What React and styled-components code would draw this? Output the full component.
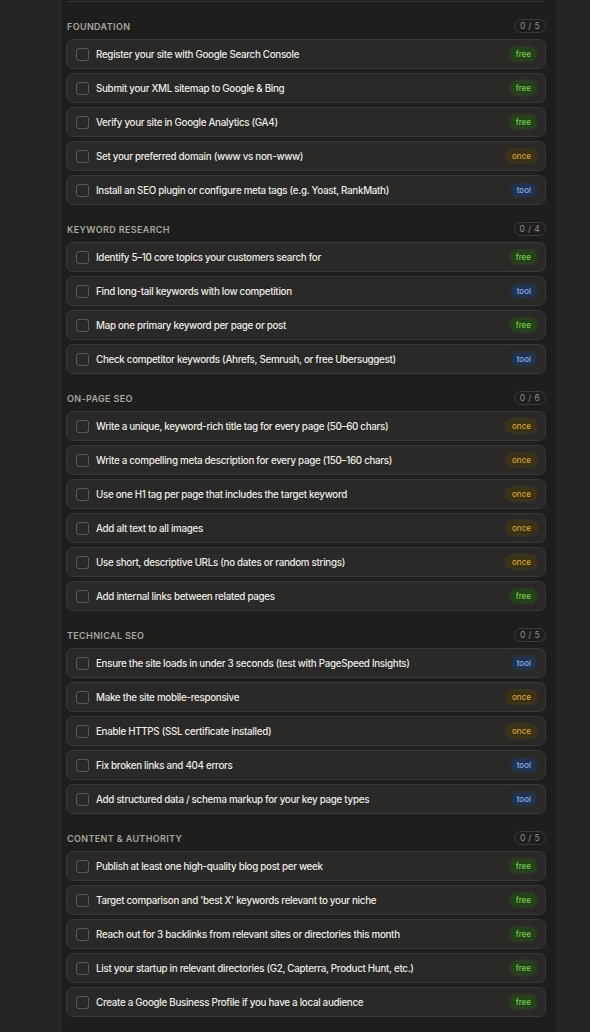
import React from 'react'
import styled, { createGlobalStyle } from 'styled-components'

const Global = createGlobalStyle`
  html, body { margin: 0; padding: 0; background: #262523; }
  body { font-family: Inter, "Noto Sans", sans-serif; -webkit-font-smoothing: antialiased; }
`

const Page = styled.div`
  min-height: 1032px;
  display: flex;
`
const Panel = styled.div`
  margin-left: 62px;
  width: 494px;
  min-height: 1032px;
  background: #1f1e1c;
  padding: 0 10px 0 4px;
  box-sizing: border-box;
`
const Tail = styled.div`
  height: 1px;
  border-bottom: 1px solid #383734;
  margin: 0 2px;
`
const Section = styled.section`
  margin-top: 16px;
`
const Header = styled.div`
  display: flex;
  align-items: center;
  justify-content: space-between;
  height: 16px;
  margin-bottom: 5px;
  padding-left: 1px;
`
const Title = styled.span`
  font-size: 9px;
  font-weight: 600;
  letter-spacing: 0.04em;
  color: #a9a69f;
  text-transform: uppercase;
`
const Count = styled.span`
  font-size: 8.5px;
  color: #8f8c85;
  border: 1px solid #3b3a37;
  border-radius: 8px;
  padding: 1px 5px;
  letter-spacing: 0.04em;
`
const List = styled.div`
  display: flex;
  flex-direction: column;
  gap: 4px;
`
const Row = styled.label`
  display: flex;
  align-items: center;
  height: 30px;
  box-sizing: border-box;
  border: 1px solid #393835;
  border-radius: 7px;
  background: #2a2927;
  padding: 0 9px;
`
const Box = styled.span`
  width: 11px;
  height: 11px;
  border: 1px solid #5b5a56;
  border-radius: 3px;
  flex: none;
`
const Text = styled.span`
  flex: 1;
  margin-left: 7px;
  font-size: 9.8px;
  font-weight: 500;
  letter-spacing: -0.3px;
  color: #ecebe6;
  white-space: nowrap;
`
const tones = {
  free: { bg: '#24421a', fg: '#78c650', glow: 'rgba(60,150,30,0.5)' },
  once: { bg: '#3d3114', fg: '#cda43c', glow: 'rgba(160,115,20,0.45)' },
  tool: { bg: '#203352', fg: '#8aabe4', glow: 'rgba(40,85,160,0.45)' },
}
const Badge = styled.span`
  font-size: 8px;
  font-weight: 500;
  line-height: 12px;
  padding: 0 5px;
  border-radius: 6px;
  color: ${p => tones[p.$kind].fg};
  background: ${p => tones[p.$kind].bg};
  box-shadow: 0 0 4px ${p => tones[p.$kind].glow};
`

const sections = [
  { title: 'Foundation', items: [
    ['Register your site with Google Search Console', 'free'],
    ['Submit your XML sitemap to Google & Bing', 'free'],
    ['Verify your site in Google Analytics (GA4)', 'free'],
    ['Set your preferred domain (www vs non-www)', 'once'],
    ['Install an SEO plugin or configure meta tags (e.g. Yoast, RankMath)', 'tool'],
  ]},
  { title: 'Keyword Research', items: [
    ['Identify 5–10 core topics your customers search for', 'free'],
    ['Find long-tail keywords with low competition', 'tool'],
    ['Map one primary keyword per page or post', 'free'],
    ['Check competitor keywords (Ahrefs, Semrush, or free Ubersuggest)', 'tool'],
  ]},
  { title: 'On-Page SEO', items: [
    ['Write a unique, keyword-rich title tag for every page (50–60 chars)', 'once'],
    ['Write a compelling meta description for every page (150–160 chars)', 'once'],
    ['Use one H1 tag per page that includes the target keyword', 'once'],
    ['Add alt text to all images', 'once'],
    ['Use short, descriptive URLs (no dates or random strings)', 'once'],
    ['Add internal links between related pages', 'free'],
  ]},
  { title: 'Technical SEO', items: [
    ['Ensure the site loads in under 3 seconds (test with PageSpeed Insights)', 'tool'],
    ['Make the site mobile-responsive', 'once'],
    ['Enable HTTPS (SSL certificate installed)', 'once'],
    ['Fix broken links and 404 errors', 'tool'],
    ['Add structured data / schema markup for your key page types', 'tool'],
  ]},
  { title: 'Content & Authority', items: [
    ['Publish at least one high-quality blog post per week', 'free'],
    ["Target comparison and 'best X' keywords relevant to your niche", 'free'],
    ['Reach out for 3 backlinks from relevant sites or directories this month', 'free'],
    ['List your startup in relevant directories (G2, Capterra, Product Hunt, etc.)', 'free'],
    ['Create a Google Business Profile if you have a local audience', 'free'],
  ]},
]

const App = () => {
  return (
    <Page>
      <Global />
      <Panel>
        <Tail />
        {sections.map(s => (
          <Section key={s.title}>
            <Header>
              <Title>{s.title}</Title>
              <Count>0 / {s.items.length}</Count>
            </Header>
            <List>
              {s.items.map(([t, k]) => (
                <Row key={t}>
                  <Box />
                  <Text>{t}</Text>
                  <Badge $kind={k}>{k}</Badge>
                </Row>
              ))}
            </List>
          </Section>
        ))}
      </Panel>
    </Page>
  )
}

export default App
